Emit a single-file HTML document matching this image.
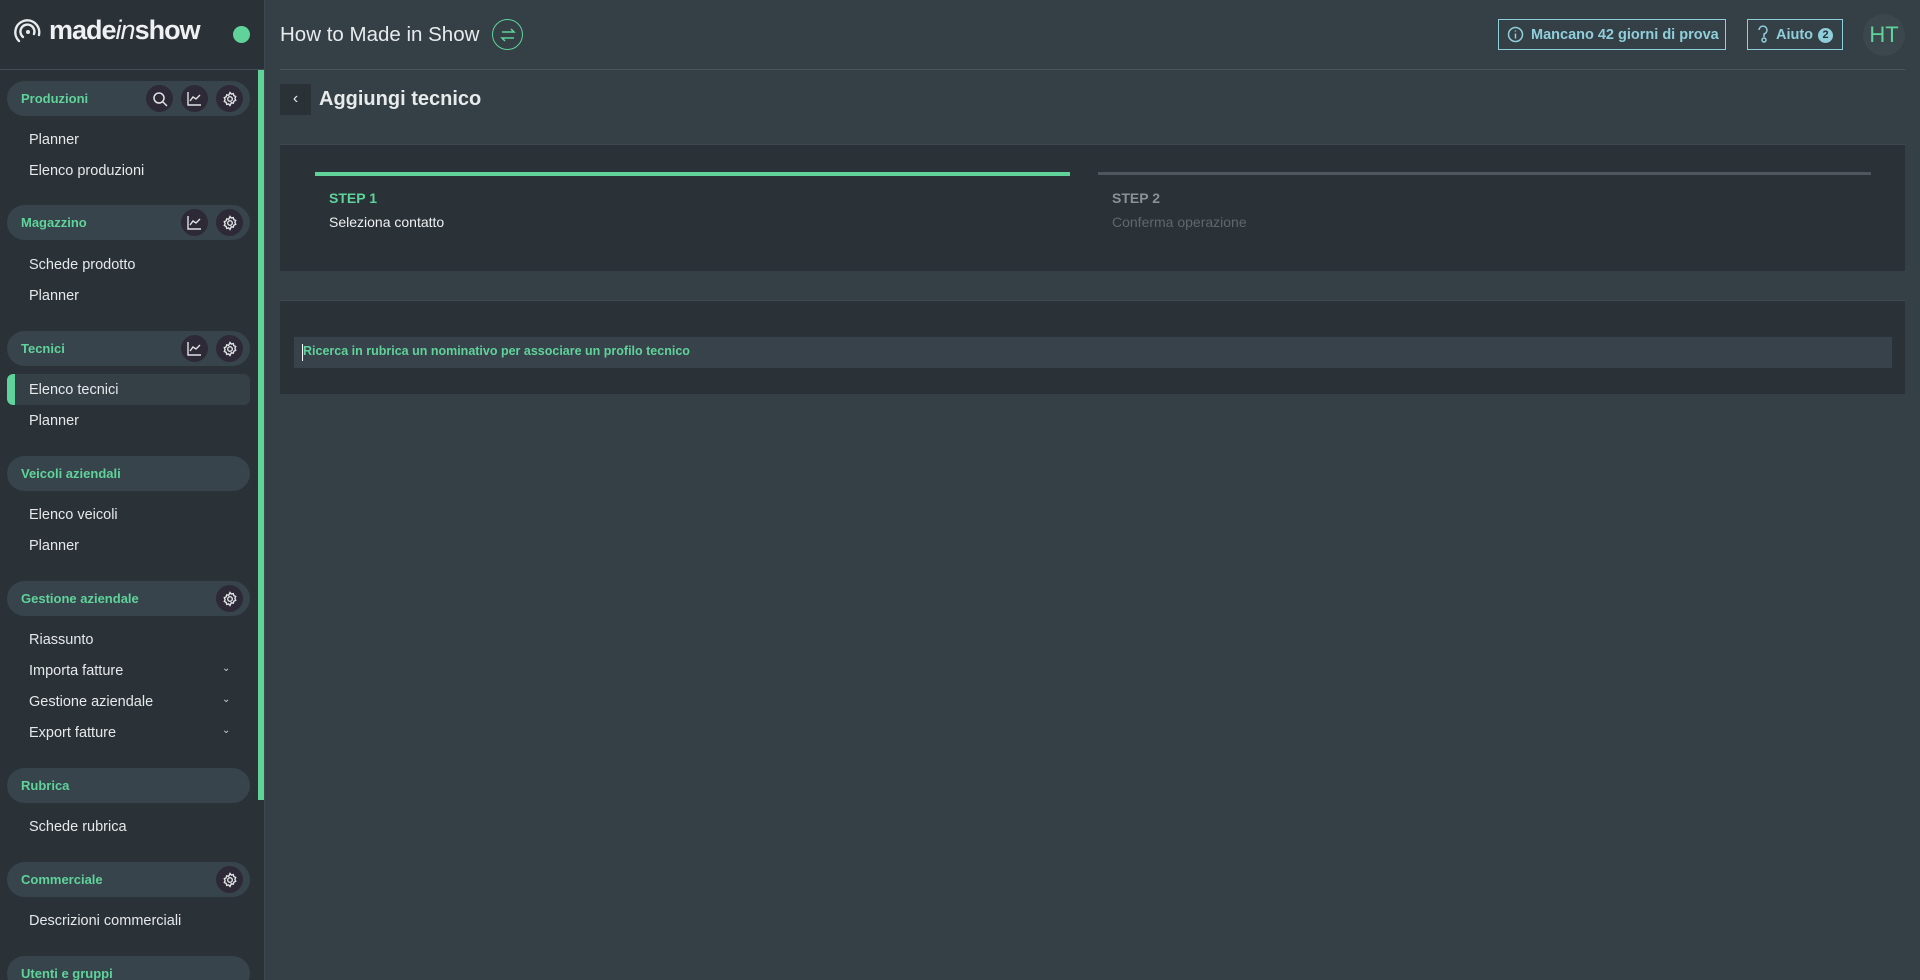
<!DOCTYPE html>
<html style="overflow:hidden;height:980px"><head><meta charset="utf-8"><style>
*{box-sizing:border-box;margin:0;padding:0}
body{width:1920px;height:980px;overflow:hidden;background:#343f46;font-family:"Liberation Sans",sans-serif;position:relative;color:#e6e9ea}
.sb{position:absolute;left:0;top:0;width:265px;height:980px;background:#2a3137;border-right:1px solid #3c474e;overflow:hidden}
.abs{position:absolute}
.pill{position:absolute;left:7px;width:243px;height:35px;border-radius:18px;background:#37444b}
.pill span{position:absolute;left:14px;top:10px;font-size:13px;font-weight:bold;color:#5fd39a}
.ic{position:absolute;top:4px;width:27px;height:27px;border-radius:50%;background:#2d2937;display:flex;align-items:center;justify-content:center}
.item{position:absolute;left:29px;font-size:14.5px;color:#e6e9ea;margin-top:2px}
.chev{position:absolute;left:222px;font-size:10px;color:#cfd4d6}
</style></head><body>
<div class="sb">
 <svg class="abs" style="left:13px;top:17px" width="30" height="30" viewBox="0 0 30 30" fill="none" stroke="#e8ebec" stroke-width="2.4" stroke-linecap="round"><path d="M6 24A12 12 0 1 1 26 18"/><path d="M10 20A7 7 0 1 1 21 17"/><circle cx="15" cy="15" r="2" fill="#e8ebec" stroke="none"/></svg>
 <div class="abs" style="left:49px;top:15px;font-size:27px;font-weight:bold;color:#eef0f1;letter-spacing:-1px">made<i style="font-weight:normal">in</i>show</div>
 <div class="abs" style="left:233px;top:26px;width:17px;height:17px;border-radius:50%;background:#5fd39a"></div>
 <div class="abs" style="left:0;top:69px;width:265px;height:1px;background:#414c53"></div>
 <div class="abs" style="left:258px;top:70px;width:7px;height:730px;background:#5fd39a"></div>

 <div class="pill" style="top:81px"><span>Produzioni</span>
  <div class="ic" style="left:139px"><svg width="16" height="16" viewBox="0 0 16 16" fill="none" stroke="#dfe3e5" stroke-width="1.5"><circle cx="7" cy="7" r="5"/><path d="M11 11l4 4"/></svg></div>
  <div class="ic" style="left:174px"><svg width="15" height="15" viewBox="0 0 15 15" fill="none" stroke="#dfe3e5" stroke-width="1.4"><path d="M1 1v13h13M3 10l3-4 3 2 4-4"/></svg></div>
  <div class="ic" style="left:209px"><svg width="16" height="16" viewBox="0 0 16 16" fill="none" stroke="#dfe3e5" stroke-width="1.4"><circle cx="8" cy="8" r="2.3"/><path d="M8 1.5l1.3 1.6 2-.5.5 2 1.9.9-.8 1.9.8 1.9-1.9.9-.5 2-2-.5L8 14.5l-1.3-1.6-2 .5-.5-2-1.9-.9.8-1.9-.8-1.9 1.9-.9.5-2 2 .5z"/></svg></div>
 </div>
 <div class="item" style="top:130px">Planner</div>
 <div class="item" style="top:161px">Elenco produzioni</div>

 <div class="pill" style="top:205px"><span>Magazzino</span>
  <div class="ic" style="left:174px"><svg width="15" height="15" viewBox="0 0 15 15" fill="none" stroke="#dfe3e5" stroke-width="1.4"><path d="M1 1v13h13M3 10l3-4 3 2 4-4"/></svg></div>
  <div class="ic" style="left:209px"><svg width="16" height="16" viewBox="0 0 16 16" fill="none" stroke="#dfe3e5" stroke-width="1.4"><circle cx="8" cy="8" r="2.3"/><path d="M8 1.5l1.3 1.6 2-.5.5 2 1.9.9-.8 1.9.8 1.9-1.9.9-.5 2-2-.5L8 14.5l-1.3-1.6-2 .5-.5-2-1.9-.9.8-1.9-.8-1.9 1.9-.9.5-2 2 .5z"/></svg></div>
 </div>
 <div class="item" style="top:255px">Schede prodotto</div>
 <div class="item" style="top:286px">Planner</div>

 <div class="pill" style="top:331px"><span>Tecnici</span>
  <div class="ic" style="left:174px"><svg width="15" height="15" viewBox="0 0 15 15" fill="none" stroke="#dfe3e5" stroke-width="1.4"><path d="M1 1v13h13M3 10l3-4 3 2 4-4"/></svg></div>
  <div class="ic" style="left:209px"><svg width="16" height="16" viewBox="0 0 16 16" fill="none" stroke="#dfe3e5" stroke-width="1.4"><circle cx="8" cy="8" r="2.3"/><path d="M8 1.5l1.3 1.6 2-.5.5 2 1.9.9-.8 1.9.8 1.9-1.9.9-.5 2-2-.5L8 14.5l-1.3-1.6-2 .5-.5-2-1.9-.9.8-1.9-.8-1.9 1.9-.9.5-2 2 .5z"/></svg></div>
 </div>
 <div class="abs" style="left:7px;top:374px;width:243px;height:31px;border-radius:6px;background:#343f46;overflow:hidden"><div style="width:8px;height:31px;background:#5fd39a;border-radius:6px 0 0 6px"></div></div>
 <div class="item" style="top:380px">Elenco tecnici</div>
 <div class="item" style="top:411px">Planner</div>

 <div class="pill" style="top:456px"><span>Veicoli aziendali</span></div>
 <div class="item" style="top:505px">Elenco veicoli</div>
 <div class="item" style="top:536px">Planner</div>

 <div class="pill" style="top:581px"><span>Gestione aziendale</span>
  <div class="ic" style="left:209px"><svg width="16" height="16" viewBox="0 0 16 16" fill="none" stroke="#dfe3e5" stroke-width="1.4"><circle cx="8" cy="8" r="2.3"/><path d="M8 1.5l1.3 1.6 2-.5.5 2 1.9.9-.8 1.9.8 1.9-1.9.9-.5 2-2-.5L8 14.5l-1.3-1.6-2 .5-.5-2-1.9-.9.8-1.9-.8-1.9 1.9-.9.5-2 2 .5z"/></svg></div>
 </div>
 <div class="item" style="top:630px">Riassunto</div>
 <div class="item" style="top:661px">Importa fatture</div><div class="chev" style="top:663px">&#8964;</div>
 <div class="item" style="top:692px">Gestione aziendale</div><div class="chev" style="top:694px">&#8964;</div>
 <div class="item" style="top:723px">Export fatture</div><div class="chev" style="top:725px">&#8964;</div>

 <div class="pill" style="top:768px"><span>Rubrica</span></div>
 <div class="item" style="top:817px">Schede rubrica</div>

 <div class="pill" style="top:862px"><span>Commerciale</span>
  <div class="ic" style="left:209px"><svg width="16" height="16" viewBox="0 0 16 16" fill="none" stroke="#dfe3e5" stroke-width="1.4"><circle cx="8" cy="8" r="2.3"/><path d="M8 1.5l1.3 1.6 2-.5.5 2 1.9.9-.8 1.9.8 1.9-1.9.9-.5 2-2-.5L8 14.5l-1.3-1.6-2 .5-.5-2-1.9-.9.8-1.9-.8-1.9 1.9-.9.5-2 2 .5z"/></svg></div>
 </div>
 <div class="item" style="top:911px">Descrizioni commerciali</div>

 <div class="pill" style="top:956px"><span>Utenti e gruppi</span></div>
</div>

<div class="abs" style="left:280px;top:23px;font-size:20.5px;color:#e8ebec">How to Made in Show</div>
<div class="abs" style="left:492px;top:19px;width:31px;height:31px;border-radius:50%;border:1.5px solid #5fd39a;display:flex;align-items:center;justify-content:center"><svg width="16" height="14" viewBox="0 0 16 14" fill="none" stroke="#5fd39a" stroke-width="1.5"><path d="M2 4h12l-3-3M14 10H2l3 3"/></svg></div>
<div class="abs" style="left:1498px;top:19px;width:228px;height:31px;border:1.5px solid #8fcfdc;color:#8fcfdc;font-size:14.5px;font-weight:bold;padding:7px 0 0 32px">Mancano 42 giorni di prova</div>
<svg class="abs" style="left:1507px;top:26px" width="17" height="17" viewBox="0 0 17 17" fill="none" stroke="#8fcfdc" stroke-width="1.5"><circle cx="8.5" cy="8.5" r="7"/><path d="M8.5 7.5v5M8.5 4.5v1"/></svg>
<div class="abs" style="left:1747px;top:19px;width:96px;height:31px;border:1.5px solid #8fcfdc;color:#8fcfdc;font-size:14.5px;font-weight:bold;padding:7px 0 0 28px">Aiuto</div>
<svg class="abs" style="left:1756px;top:25px" width="14" height="19" viewBox="0 0 14 19" fill="none" stroke="#8fcfdc" stroke-width="1.5"><path d="M3 5a4 4 0 1 1 5 4v3"/><circle cx="8" cy="15" r="2"/></svg>
<div class="abs" style="left:1818px;top:28px;width:15px;height:15px;border-radius:50%;background:#8fcfdc;color:#2a3137;font-size:11px;font-weight:bold;text-align:center;line-height:15px">2</div>
<div class="abs" style="left:1863px;top:14px;width:42px;height:42px;border-radius:50%;background:#3b464d;color:#5fd39a;font-size:22px;text-align:center;line-height:42px">HT</div>
<div class="abs" style="left:280px;top:69px;width:1625px;height:1px;background:#4a555c"></div>

<div class="abs" style="left:280px;top:84px;width:31px;height:31px;background:#2a3137;color:#e8ebec;font-size:16px;text-align:center;line-height:29px">&#8249;</div>
<div class="abs" style="left:319px;top:88px;font-size:20px;font-weight:bold;color:#e8ebec">Aggiungi tecnico</div>

<div class="abs" style="left:280px;top:144px;width:1625px;height:127px;background:#2a3137;border-top:1px solid #3e4950">
 <div class="abs" style="left:35px;top:27px;width:755px;height:4px;background:#5fd39a"></div>
 <div class="abs" style="left:818px;top:27px;width:773px;height:3px;background:#4e575d"></div>
 <div class="abs" style="left:49px;top:45px;font-size:14px;font-weight:bold;color:#5fd39a">STEP 1</div>
 <div class="abs" style="left:49px;top:69px;font-size:14px;color:#eef0f1">Seleziona contatto</div>
 <div class="abs" style="left:832px;top:45px;font-size:14px;font-weight:bold;color:#8b9296">STEP 2</div>
 <div class="abs" style="left:832px;top:69px;font-size:14px;color:#5f686d">Conferma operazione</div>
</div>

<div class="abs" style="left:280px;top:300px;width:1625px;height:94px;background:#2a3137;border-top:1px solid #3e4950">
 <div class="abs" style="left:14px;top:36px;width:1598px;height:31px;background:#37424a">
  <div class="abs" style="left:8px;top:7px;width:1px;height:17px;background:#fff"></div>
  <div class="abs" style="left:9px;top:7px;font-size:12.5px;font-weight:bold;color:#5fd39a">Ricerca in rubrica un nominativo per associare un profilo tecnico</div>
 </div>
</div>
</body></html>
